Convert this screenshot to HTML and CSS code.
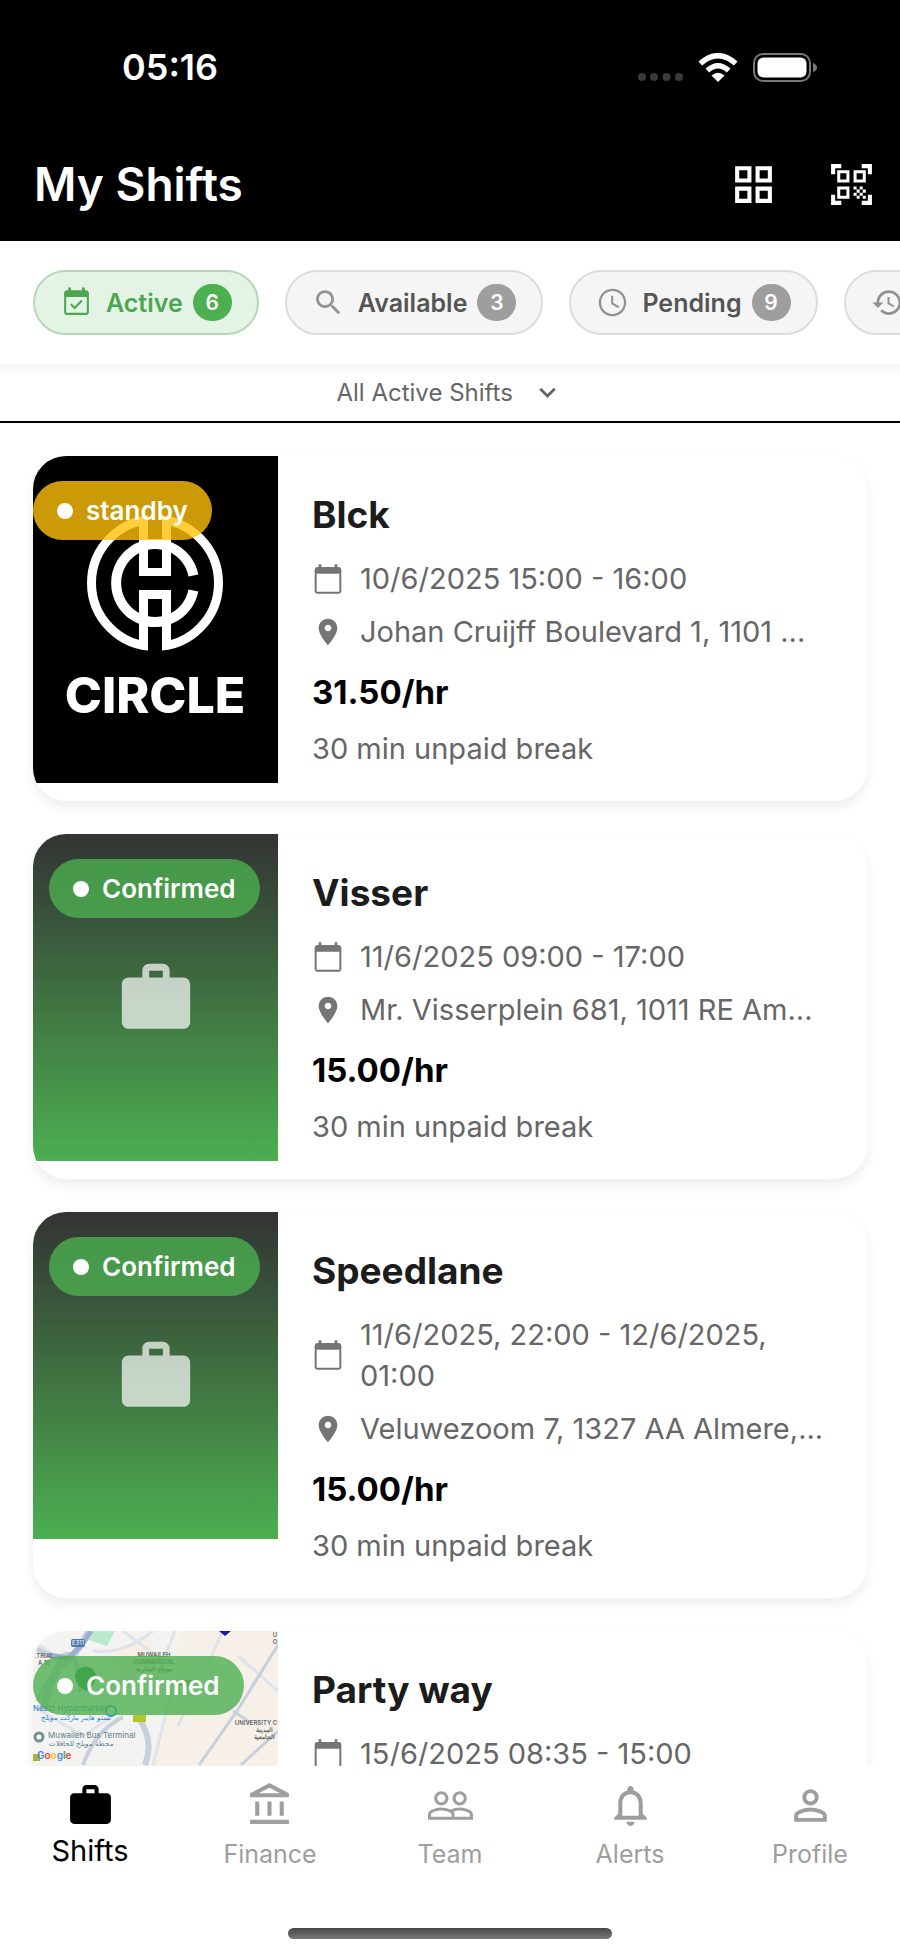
FILE: index.html
```html
<!DOCTYPE html>
<html lang="en">
<head>
  <meta charset="UTF-8" />
  <meta name="viewport" content="width=device-width, initial-scale=1.0"/>
  <title>My Shifts</title>
  <link rel="stylesheet" href="styles.css">
</head>
<body>

<!-- shared icons -->
<svg class="sprite" aria-hidden="true">
  <symbol id="i-calendar" viewBox="0 0 24 24"><path d="M20 3h-1V1h-2v2H7V1H5v2H4c-1.100 0-2 .9-2 2v16c0 1.100.9 2 2 2h16c1.100 0 2-.9 2-2V5c0-1.100-.9-2-2-2zm.5 18.500h-17V8h17v13.500z"/></symbol>
  <symbol id="i-place" viewBox="0 0 24 24"><path d="M12 2C8.130 2 5 5.130 5 9c0 5.250 7 13 7 13s7-7.750 7-13c0-3.870-3.130-7-7-7zm0 9.500c-1.380 0-2.500-1.120-2.500-2.500s1.120-2.500 2.500-2.500 2.500 1.120 2.500 2.500-1.120 2.500-2.500 2.500z"/></symbol>
  <symbol id="i-work" viewBox="0 0 24 24"><path d="M20 6h-4V4c0-1.110-.89-2-2-2h-4c-1.110 0-2 .89-2 2v2H4c-1.110 0-2 .89-2 2v11c0 1.110.89 2 2 2h16c1.110 0 2-.89 2-2V8c0-1.110-.89-2-2-2zm-6 0h-4V4h4v2z"/></symbol>
</svg>

<div class="app">
  <header class="header">
    <div class="status-bar">
      <span class="time">05:16</span>
      <div class="status-icons">
        <svg class="signal" width="45" height="9" viewBox="0 0 45 9"><circle cx="4" cy="4" r="4"/><circle cx="16" cy="4" r="4"/><circle cx="28.500" cy="4" r="4"/><circle cx="41" cy="4" r="4"/></svg>
        <svg class="wifi" width="40" height="29" viewBox="0 0 40 29"><g fill="none" stroke="#fff" stroke-width="5.500"><path d="M2.300 10.500Q20-5 37.700 10.500"/><path d="M9.300 17.500Q20 8 30.700 17.500"/></g><path d="M13.500 22.500Q20 17 26.500 22.500L20 29z"/></svg>
        <svg width="64" height="29" viewBox="0 0 64 29"><rect x="1" y="1" width="56" height="27" rx="9" fill="none" stroke="#777" stroke-width="2"/><rect x="4.500" y="4.500" width="49" height="20" rx="6" fill="#fff"/><path d="M60 10q4 1.500 4 4.500t-4 4.500z" fill="#777"/></svg>
      </div>
    </div>
    <div class="title-bar">
      <h1>My Shifts</h1>
      <button class="icon-btn" aria-label="Grid view">
        <svg viewBox="0 0 24 24"><path d="M3 3v8h8V3H3zm6 6H5V5h4v4zm-6 4v8h8v-8H3zm6 6H5v-4h4v4zm4-16v8h8V3h-8zm6 6h-4V5h4v4zm-6 4v8h8v-8h-8zm6 6h-4v-4h4v4z"/></svg>
      </button>
      <button class="icon-btn" aria-label="Scan QR code">
        <svg viewBox="0 0 24 24"><path d="M9.500 6.500v3h-3v-3h3M11 5H5v6h6V5zm-1.500 9.500v3h-3v-3h3M11 13H5v6h6v-6zm6.500-6.500v3h-3v-3h3M19 5h-6v6h6V5zm-6 8h1.500v1.500H13V13zm1.500 1.500H16V16h-1.500v-1.500zM16 13h1.500v1.500H16V13zm-3 3h1.500v1.500H13V16zm1.500 1.500H16V19h-1.500v-1.500zM16 16h1.500v1.500H16V16zm1.500-1.500H19V16h-1.500v-1.500zm0 3H19V19h-1.500v-1.500zM22 7h-2V4h-3V2h5v5zm0 15v-5h-2v3h-3v2h5zM2 22h5v-2H4v-3H2v5zM2 2v5h2V4h3V2H2z"/></svg>
      </button>
    </div>
  </header>

  <div class="filters">
    <button class="chip active">
      <svg viewBox="0 0 24 24"><path d="M16.530 11.060L15.470 10l-4.880 4.880-2.120-2.120-1.060 1.060L10.590 17l5.940-5.940zM19 3h-1V1h-2v2H8V1H6v2H5c-1.110 0-2 .9-2 2v14c0 1.100.89 2 2 2h14c1.100 0 2-.9 2-2V5c0-1.100-.9-2-2-2zm.5 16.500h-15V8h15v11.500z"/></svg>
      <span>Active</span><span class="count">6</span>
    </button>
    <button class="chip">
      <svg viewBox="0 0 24 24"><path d="M15.500 14h-.79l-.28-.27C15.410 12.590 16 11.110 16 9.500 16 5.910 13.090 3 9.500 3S3 5.910 3 9.500 5.910 16 9.500 16c1.610 0 3.090-.59 4.230-1.570l.27.28v.79l5 4.990L20.490 19l-4.990-5zm-6 0C7.010 14 5 11.990 5 9.500S7.010 5 9.500 5 14 7.010 14 9.500 11.990 14 9.500 14z"/></svg>
      <span>Available</span><span class="count">3</span>
    </button>
    <button class="chip">
      <svg viewBox="0 0 24 24"><path d="M12 2C6.480 2 2 6.480 2 12s4.480 10 10 10 10-4.480 10-10S17.520 2 12 2zm0 18.300c-4.580 0-8.300-3.720-8.300-8.300S7.420 3.700 12 3.700s8.300 3.720 8.300 8.300-3.720 8.300-8.300 8.300zM12.500 7H11v6l5.250 3.150.75-1.230-4.500-2.670z"/></svg>
      <span>Pending</span><span class="count">9</span>
    </button>
    <button class="chip">
      <svg viewBox="0 0 24 24"><path d="M13 3c-4.970 0-9 4.030-9 9H1l3.890 3.890.07.14L9 12H6c0-3.870 3.130-7 7-7s7 3.130 7 7-3.130 7-7 7c-1.930 0-3.680-.79-4.940-2.060l-1.420 1.420C8.270 19.990 10.510 21 13 21c4.970 0 9-4.030 9-9s-4.030-9-9-9zm-1 5v5l4.280 2.540.72-1.210-3.500-2.080V8H12z"/></svg>
      <span>History</span>
    </button>
  </div>

  <div class="sort-bar">
    <select aria-label="Shift filter">
      <option>All Active Shifts</option>
    </select>
    <svg viewBox="0 0 24 24" aria-hidden="true"><path d="M7.410 8.590L12 13.170l4.590-4.580L18 10l-6 6-6-6z"/></svg>
  </div>

  <main class="shift-list">
    <article class="card">
      <div class="thumb has-image">
        <svg class="picture" viewBox="0 0 245 327">
          <rect width="245" height="327" fill="#000"/>
          <g fill="none" stroke="#fff">
            <circle cx="122" cy="127" r="63.500" stroke-width="9"/>
            <path d="M160.400 119.500A39 39 0 1 0 160.400 134.500" stroke-width="10"/>
          </g>
          <path fill="#000" d="M115 56h14v27h-14zM115 171h14v27h-14zM115 93h14v68h-14zM106 120h32v14h-32z"/>
          <path fill="#fff" d="M106 62h9v50h14V62h9v58h-32zM106 134h32v56h-9v-47h-14v47h-9z"/>
          <path fill="none" stroke="#fff" stroke-width="10" d="M114 88.800a39 39 0 0 1 16 0M114 165.200a39 39 0 0 0 16 0"/>
          <text x="122" y="257" class="logo-text">CIRCLE</text>
        </svg>
        <span class="badge standby">standby</span>
      </div>
      <div class="info">
        <h2>Blck</h2>
        <p class="meta"><svg><use href="#i-calendar"/></svg><span>10/6/2025 15:00 - 16:00</span></p>
        <p class="meta address"><svg><use href="#i-place"/></svg><span>Johan Cruijff Boulevard 1, 1101 ...</span></p>
        <p class="rate">31.50/hr</p>
        <p class="break">30 min unpaid break</p>
      </div>
    </article>

    <article class="card">
      <div class="thumb">
        <svg class="placeholder"><use href="#i-work"/></svg>
        <span class="badge">Confirmed</span>
      </div>
      <div class="info">
        <h2>Visser</h2>
        <p class="meta"><svg><use href="#i-calendar"/></svg><span>11/6/2025 09:00 - 17:00</span></p>
        <p class="meta address"><svg><use href="#i-place"/></svg><span>Mr. Visserplein 681, 1011 RE Am...</span></p>
        <p class="rate">15.00/hr</p>
        <p class="break">30 min unpaid break</p>
      </div>
    </article>

    <article class="card">
      <div class="thumb">
        <svg class="placeholder"><use href="#i-work"/></svg>
        <span class="badge">Confirmed</span>
      </div>
      <div class="info">
        <h2>Speedlane</h2>
        <p class="meta"><svg><use href="#i-calendar"/></svg><span>11/6/2025, 22:00 - 12/6/2025, 01:00</span></p>
        <p class="meta address"><svg><use href="#i-place"/></svg><span>Veluwezoom 7, 1327 AA Almere,...</span></p>
        <p class="rate">15.00/hr</p>
        <p class="break">30 min unpaid break</p>
      </div>
    </article>

    <article class="card">
      <div class="thumb has-image">
        <svg class="picture" viewBox="0 0 245 327">
          <rect width="245" height="327" fill="#f3f3f2"/>
          <path fill="#f6f0e8" d="M148 0h97v327H60l58-175z"/>
          <path fill="#f7efe3" d="M75 20l40-12 20 40-45 12z"/>
          <path fill="#b9ead0" d="M60 0h22l-8 15-18-6z"/>
          <g fill="none" stroke="#dfe3ea" stroke-width="3">
            <path d="M60 20q30 4 60-20M118 60l24-60M130 30l-40-30M0 75l50 30 30-20M190 0l-45 95M245 60l-40-35M0 10l30 20M120 134l20-80"/>
          </g>
          <g fill="none" stroke="#c7cfdb">
            <path stroke-width="7" d="M56 0Q42 26 30 34T10 80"/>
            <path stroke-width="5" d="M0 15Q20 30 32 24T48 60"/>
            <path stroke-width="4" d="M28 28Q10 60 4 70M50 134Q62 100 90 86"/>
            <path stroke-width="6" d="M104 85Q122 108 112 134"/>
            <path stroke-width="3" d="M245 14L204 80 166 134M245 100L208 134M200 80l18 12"/>
          </g>
          <path fill="none" stroke="#9caecb" stroke-width="5" d="M58 0Q46 20 34 27L16 24"/>
          <rect x="38" y="8" width="14" height="8" rx="2" fill="#4b79a6"/>
          <text x="45" y="14" class="map-road">E311</text>
          <path fill="#191b9e" d="M186 0h12l-6 5z"/>
          <g class="map-area">
            <text x="11" y="27">.TRIAL</text>
            <text x="11" y="34">A 15</text>
            <text x="121" y="26">MUWAILEH</text>
            <text x="121" y="33">COMMERCIAL</text>
            <text x="121" y="40">مويلح التجارية</text>
            <text x="223" y="94">UNIVERSITY C</text>
            <text x="231" y="101">المدينة</text>
            <text x="231" y="108">الجامعية</text>
            <text x="242" y="6">U</text>
            <text x="242" y="13">O</text>
          </g>
          <path d="M42 46a10 10 0 1 1 21 0q-1 8-10 14q-10-6-11-14z" fill="#188038"/>
          <rect x="100" y="84" width="13" height="7" fill="#b3c42d"/>
          <rect x="146" y="49" width="14" height="6" fill="#8fb02d"/>
          <rect x="0" y="123" width="7" height="7" fill="#a4b92f"/>
          <circle cx="78" cy="80" r="5" fill="#fff" stroke="#1ba1c4" stroke-width="2"/>
          <text x="0" y="80" class="map-shop">Nesto Hypermarket</text>
          <text x="8" y="89" class="map-shop small">نستو هايبر ماركت مويلح</text>
          <circle cx="6" cy="106" r="4" fill="#fff" stroke="#788f98" stroke-width="3"/>
          <text x="15" y="107" class="map-stop">Muwaileh Bus Terminal</text>
          <text x="16" y="115" class="map-stop small">محطة مويلح للحافلات</text>
          <text x="4" y="128" class="map-logo"><tspan fill="#4285f4">G</tspan><tspan fill="#ea4335">o</tspan><tspan fill="#fbbc05">o</tspan><tspan fill="#4285f4">g</tspan><tspan fill="#34a853">l</tspan><tspan fill="#ea4335">e</tspan></text>
        </svg>
        <span class="badge">Confirmed</span>
      </div>
      <div class="info">
        <h2>Party way</h2>
        <p class="meta"><svg><use href="#i-calendar"/></svg><span>15/6/2025 08:35 - 15:00</span></p>
      </div>
    </article>
  </main>

  <nav class="tab-bar">
    <div class="tabs">
      <a href="#shifts" class="tab selected">
        <svg><use href="#i-work"/></svg>
        <span>Shifts</span>
      </a>
      <a href="#finance" class="tab">
        <svg viewBox="0 0 24 24"><path d="M6.500 10h-2v7h2v-7zm6 0h-2v7h2v-7zm8.500 9H2v2h19v-2zm-2.500-9h-2v7h2v-7zm-7-6.740L16.710 6H6.290l5.210-2.740m0-2.260L2 6v2h19V6l-9.500-5z"/></svg>
        <span>Finance</span>
      </a>
      <a href="#team" class="tab">
        <svg viewBox="0 0 24 24"><path d="M16.500 13c-1.200 0-3.070.34-4.500 1-1.430-.67-3.300-1-4.500-1C5.330 13 1 14.080 1 16.250V19h22v-2.750c0-2.170-4.330-3.250-6.500-3.250zm-4 4.500h-10v-1.250c0-.54 2.560-1.750 5-1.750s5 1.210 5 1.750v1.250zm9 0H14v-1.250c0-.46-.2-.86-.52-1.220.88-.3 1.960-.53 3.020-.53 2.440 0 5 1.210 5 1.750v1.250zM7.500 12c1.930 0 3.500-1.570 3.500-3.500S9.430 5 7.500 5 4 6.570 4 8.500 5.570 12 7.500 12zm0-5.500c1.100 0 2 .9 2 2s-.9 2-2 2-2-.9-2-2 .9-2 2-2zm9 5.500c1.930 0 3.500-1.570 3.500-3.500S18.430 5 16.500 5 13 6.570 13 8.500s1.570 3.500 3.500 3.500zm0-5.500c1.100 0 2 .9 2 2s-.9 2-2 2-2-.9-2-2 .9-2 2-2z"/></svg>
        <span>Team</span>
      </a>
      <a href="#alerts" class="tab">
        <svg viewBox="0 0 24 24"><path d="M12 22c1.100 0 2-.9 2-2h-4c0 1.100.89 2 2 2zm6-6v-5c0-3.070-1.640-5.640-4.500-6.320V4c0-.83-.67-1.500-1.500-1.500s-1.500.67-1.500 1.500v.68C7.630 5.360 6 7.920 6 11v5l-2 2v1h16v-1l-2-2zm-2 1H8v-6c0-2.480 1.510-4.500 4-4.500s4 2.020 4 4.500v6z"/></svg>
        <span>Alerts</span>
      </a>
      <a href="#profile" class="tab">
        <svg viewBox="0 0 24 24"><path d="M12 5.900c1.160 0 2.100.94 2.100 2.100s-.94 2.100-2.100 2.100S9.900 9.160 9.900 8s.94-2.100 2.100-2.100m0 9c2.970 0 6.100 1.460 6.100 2.100v1.100H5.900V17c0-.64 3.130-2.100 6.100-2.100M12 4C9.790 4 8 5.790 8 8s1.790 4 4 4 4-1.790 4-4-1.790-4-4-4zm0 9c-2.670 0-8 1.340-8 4v3h16v-3c0-2.660-5.330-4-8-4z"/></svg>
        <span>Profile</span>
      </a>
    </div>
    <div class="home-indicator"></div>
  </nav>
</div>

</body>
</html>
```
FILE: styles.css
```css
* {
  box-sizing: border-box;
}

body {
  margin: 0;
  font-family: Inter, "Liberation Sans", sans-serif;
  background: #fff;
  color: #666;
}

h1, h2, p {
  margin: 0;
}

button, select {
  font: inherit;
  border: none;
  background: none;
  cursor: pointer;
}

svg {
  fill: currentColor;
  flex: none;
}

.sprite {
  display: none;
}

.app {
  display: flex;
  flex-direction: column;
  height: 100vh;
  overflow: hidden;
}

/* header */
.header {
  background: #000;
  color: #fff;
  padding-bottom: 16px;
}

.status-bar {
  display: flex;
  justify-content: space-between;
  align-items: center;
  padding: 45px 83px 0 122px;
}

.time {
  font-size: 36px;
  line-height: 44px;
  font-weight: 600;
}

.status-icons {
  display: flex;
  align-items: flex-end;
}

.signal {
  color: #3a3a3a;
}

.wifi {
  margin: 0 15px;
}

.title-bar {
  display: flex;
  align-items: center;
  padding: 54px 0 0 34px;
}

h1 {
  flex: 1;
  font-size: 46px;
  line-height: 82px;
  font-weight: 600;
}

.icon-btn {
  width: 98px;
  height: 82px;
  padding: 0;
  color: #fff;
  display: flex;
  align-items: center;
  justify-content: center;
}

.icon-btn svg {
  width: 49px;
  height: 49px;
}

/* filter chips */
.filters {
  display: flex;
  flex: none;
  gap: 26px;
  padding: 29px 33px;
  overflow: hidden;
}

.chip {
  display: flex;
  flex: none;
  align-items: center;
  height: 65px;
  padding: 0 25px;
  border: 2px solid #dcdcdc;
  border-radius: 33px;
  background: #f5f5f5;
  color: #555;
  font-size: 25px;
  font-weight: 600;
}

.chip svg {
  width: 33px;
  height: 33px;
  margin-right: 13px;
  color: #929292;
}

.count {
  width: 39px;
  height: 37px;
  margin-left: 10px;
  border-radius: 19px;
  background: #9e9e9e;
  color: #fff;
  font-size: 21px;
  line-height: 37px;
  text-align: center;
}

.chip.active {
  background: #e4f4e4;
  border-color: #b7d8b8;
  color: #4ba650;
}

.chip.active svg {
  color: #4ba650;
}

.chip.active .count {
  background: #4caf50;
  color: #fff;
}

.sort-bar {
  display: flex;
  flex: none;
  align-items: center;
  justify-content: center;
  gap: 17px;
  height: 59px;
  border-bottom: 2px solid #000;
  background: linear-gradient(#f7f7f7, #fff 12px);
}

.sort-bar select {
  appearance: none;
  padding: 0;
  font-size: 24px;
  color: #666;
}

.sort-bar svg {
  width: 33px;
  height: 33px;
}

/* shift cards */
.shift-list {
  flex: 1;
  min-height: 0;
  overflow: hidden;
  display: flex;
  flex-direction: column;
  gap: 33px;
  padding: 33px;
}

.card {
  display: flex;
  flex: none;
  align-items: flex-start;
  border-radius: 33px;
  overflow: hidden;
  background: #fff;
  box-shadow: 0 6px 12px rgba(0, 0, 0, 0.07);
}

.thumb {
  position: relative;
  flex: none;
  display: flex;
  align-items: center;
  justify-content: center;
  width: 245px;
  height: 327px;
  background: linear-gradient(#333, #4caf50);
}

.thumb.has-image {
  background: none;
}

.picture {
  width: 100%;
  height: 100%;
}

.placeholder {
  width: 82px;
  height: 82px;
  color: rgba(255, 255, 255, 0.7);
}

.badge {
  position: absolute;
  top: 25px;
  left: 16px;
  display: flex;
  align-items: center;
  gap: 13px;
  height: 59px;
  padding: 0 24px;
  border-radius: 30px;
  background: rgba(76, 175, 80, 0.8);
  color: #fff;
  font-size: 26px;
  font-weight: 600;
}

.badge::before {
  content: "";
  width: 16px;
  height: 16px;
  border-radius: 50%;
  background: #fff;
}

.has-image .badge {
  left: 0;
}

.badge.standby {
  background: rgba(255, 193, 7, 0.8);
}

.logo-text {
  fill: #fff;
  font-size: 50px;
  font-weight: 800;
  text-anchor: middle;
}

.map-area {
  fill: #666;
  font-size: 6px;
  font-weight: 600;
  text-anchor: middle;
}

.map-road {
  fill: #fff;
  font-size: 6px;
  text-anchor: middle;
}

.map-shop {
  fill: #2f7fd0;
  font-size: 8px;
}

.map-stop {
  fill: #607d8b;
  font-size: 8px;
}

.map-shop.small,
.map-stop.small {
  font-size: 7px;
}

.map-logo {
  font-size: 10px;
  font-weight: 600;
}

.info {
  flex: 1;
  min-width: 0;
  padding: 34px 33px 32px 34px;
  font-size: 29px;
  line-height: 41px;
}

h2 {
  margin-bottom: 18px;
  font-size: 37px;
  line-height: 50px;
  font-weight: 700;
  color: #1c1c1c;
}

.meta {
  display: flex;
  align-items: center;
  gap: 16px;
  margin-bottom: 12px;
}

.meta svg {
  width: 32px;
  height: 32px;
  color: #757575;
}

.address span {
  white-space: nowrap;
  overflow: hidden;
}

.rate {
  margin: 18px 0 13px;
  font-size: 33px;
  line-height: 45px;
  font-weight: 700;
  color: #000;
}

/* bottom tabs */
.tab-bar {
  flex: none;
  padding: 15px 0 16px;
  background: #fff;
}

.tabs {
  display: flex;
  height: 147px;
}

.tab {
  flex: 1;
  display: flex;
  flex-direction: column;
  align-items: center;
  color: #9e9e9e;
  font-size: 25px;
  line-height: 48px;
  text-decoration: none;
}

.tab svg {
  width: 49px;
  height: 49px;
}

.tab.selected {
  color: #000;
  font-size: 29px;
  line-height: 42px;
}

.home-indicator {
  width: 36%;
  height: 11px;
  margin: 0 auto;
  border-radius: 6px;
  background: linear-gradient(#484848, #777);
}
```
